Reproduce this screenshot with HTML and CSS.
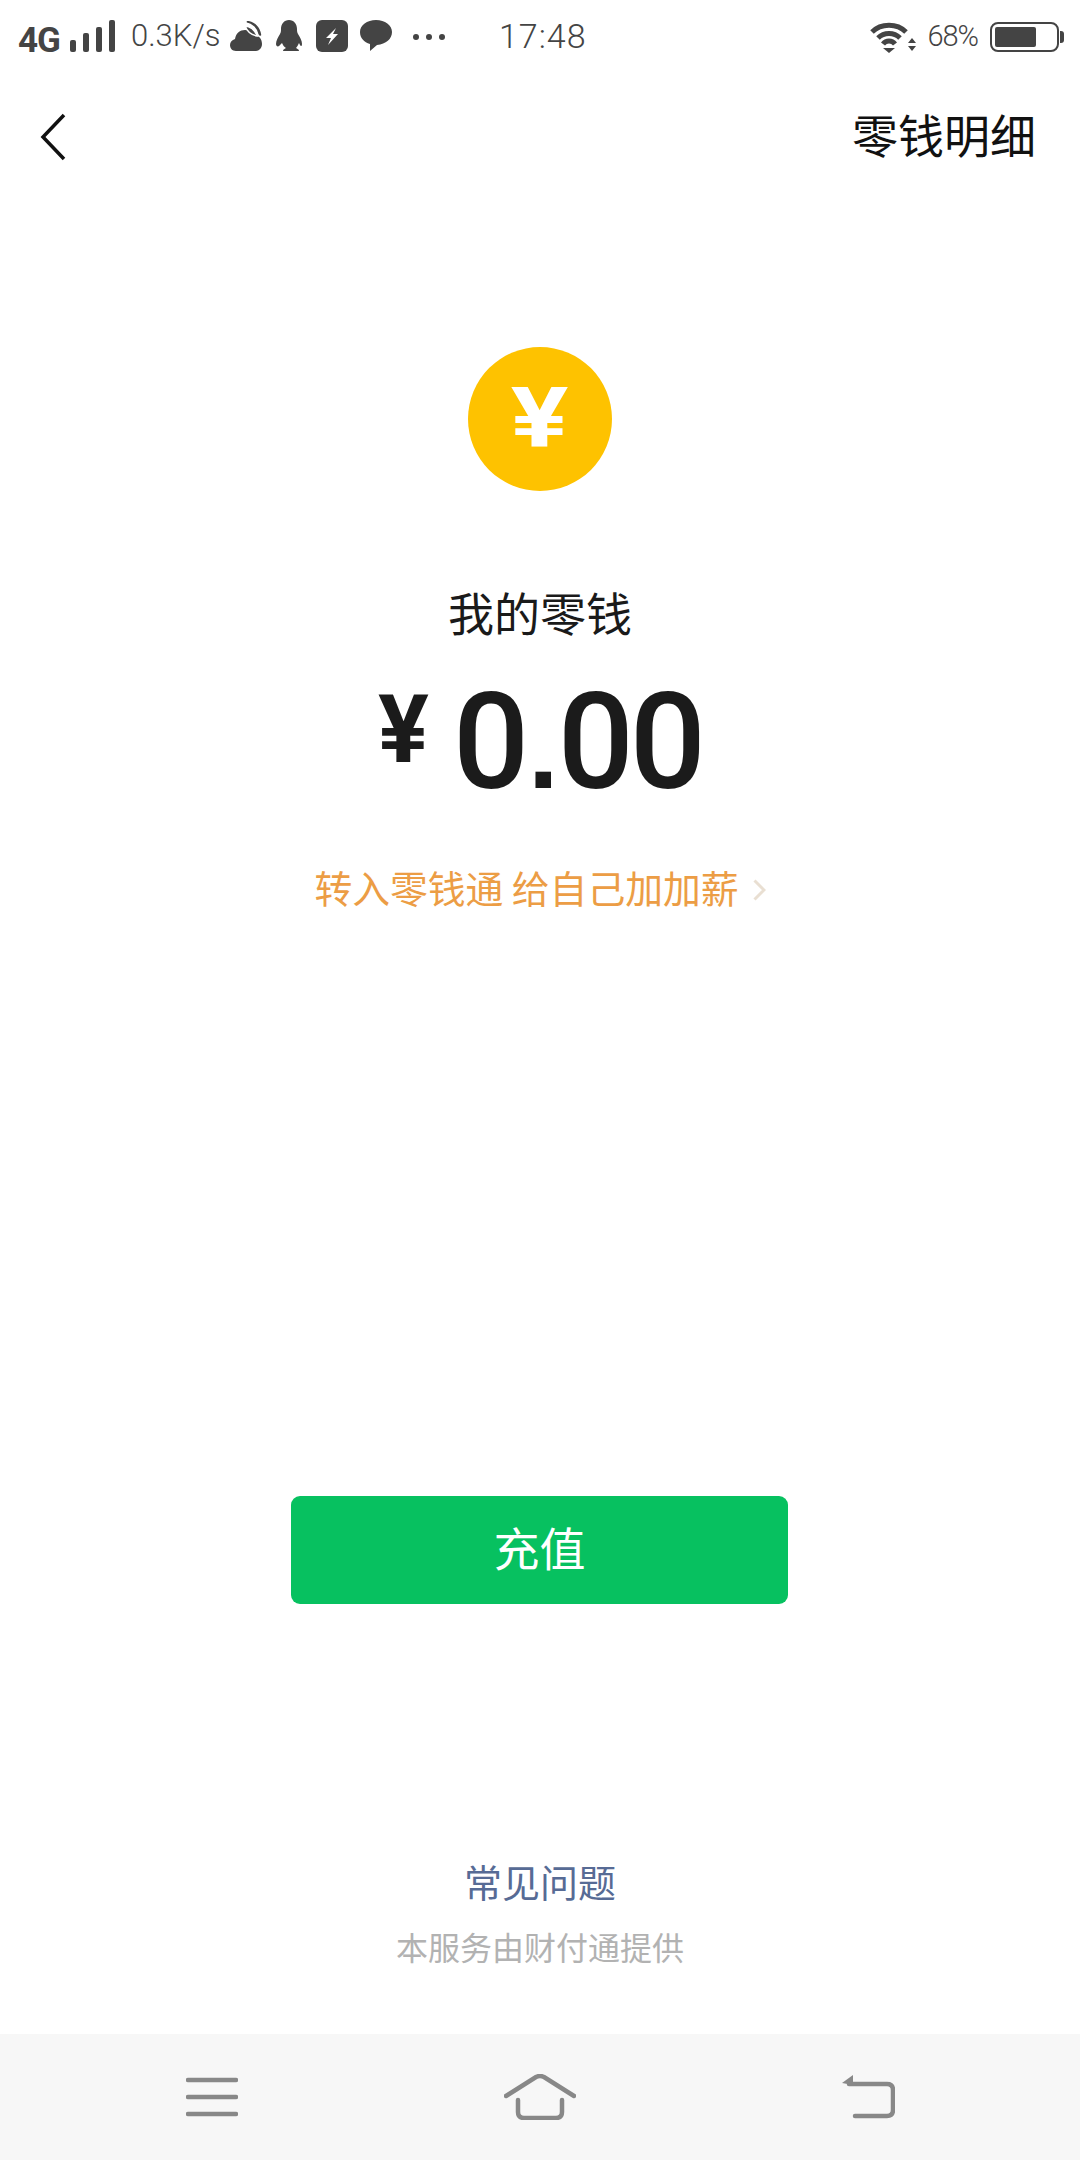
FILE: index.html
```html
<!DOCTYPE html>
<html lang="zh-CN">
<head>
<meta charset="utf-8">
<title>我的零钱</title>
<link rel="stylesheet" href="styles.css">
</head>
<body>
<div class="page">
  <header class="status">
    <span class="net">4G</span>
    <svg class="ic-signal" viewBox="0 0 45 32" width="45" height="32"><rect x="0" y="20" width="6" height="12" rx="2"/><rect x="13" y="13" width="6" height="19" rx="2"/><rect x="26" y="7" width="6" height="25" rx="2"/><rect x="39" y="0" width="6" height="32" rx="2"/></svg>
    <span class="speed">0.3K/s</span>
    <svg class="ic ic-cloud" viewBox="0 0 32 32" width="32" height="32"><path d="M6 31C2 31 0 28 0 25c0-3 2-5 5-6 1-6 5-9 10-9 4 0 7 2 9 5 5 0 8 4 8 9 0 4-3 7-6 7z"/><path class="halo" d="M15 6c5 0 10 4 12 10-6-1-10-5-12-10z"/><path class="halo" d="M16 0c8 0 15 6 16 15 0 2-3 2-4 0-1-6-6-11-12-12z"/></svg>
    <svg class="ic ic-qq" viewBox="0 0 28 32" width="28" height="32"><path d="M14 0c5 0 8 4 8 9 0 2 0 3 1 5 2 3 4 7 4 10 0 2-1 3-2 1l-1-2c-1 2-2 4-3 5 1 1 3 1 3 3H8c0-2 2-2 3-3-2-1-3-3-4-5l-2 2c-1 2-4 2-4-1 0-3 2-7 4-10 1-2 1-3 1-5 0-5 3-9 8-9z"/></svg>
    <svg class="ic ic-bolt" viewBox="0 0 32 32" width="32" height="32"><rect width="32" height="32" rx="6"/><path class="cut" d="M20 8 10 18h5l-3 7 10-11h-5z"/></svg>
    <svg class="ic ic-bubble" viewBox="0 0 32 32" width="32" height="32"><path d="M16 0c9 0 16 5 16 12 0 7-6 12-15 13l-7 6 0-7C4 22 0 18 0 12 0 5 7 0 16 0z"/></svg>
    <span class="dots"><i></i><i></i><i></i></span>
    <span class="time">17:48</span>
    <div class="status-right">
      <svg class="ic-wifi" viewBox="0 0 46 32" width="46" height="32"><path class="arc" d="M2 11C11 2 27 2 36 11M8 17C14 11 24 11 30 17M13 23C16 19 22 19 25 23"/><path d="M19 32l-6-5h12z"/><path d="M42 17l-4 5h8zM42 30l-4-5h8z"/></svg>
      <span class="pct">68%</span>
      <div class="battery"><div class="battery-fill"></div></div>
    </div>
  </header>

  <nav class="nav">
    <svg class="back" viewBox="0 0 26 48" width="26" height="48"><path d="M24 2 3 24l21 22"/></svg>
    <span class="nav-title">零钱明细</span>
  </nav>

  <main class="main">
    <div class="coin"><span class="coin-mark">¥</span></div>
    <div class="label">我的零钱</div>
    <div class="amount"><span class="cur">¥</span><span class="num">0<span class="dot">.</span>00</span></div>
    <div class="promo"><span>转入零钱通 给自己加加薪</span><svg class="chev" viewBox="0 0 13 22" width="13" height="22"><path d="M1.500 1.500 11 11l-9.500 9.500"/></svg></div>
    <button class="btn" type="button">充值</button>
    <div class="faq">常见问题</div>
    <div class="note">本服务由财付通提供</div>
  </main>

  <footer class="tabbar">
    <svg class="tab-ic" viewBox="0 0 52 40" width="52" height="40"><path d="M2 3h48M2 20h48M2 37h48"/></svg>
    <svg class="tab-ic" viewBox="0 0 72 46" width="72" height="46"><path d="M2 22 32 3q4-2 8 0l30 19"/><path d="M14 26v12q0 6 6 6h32q6 0 6-6V26"/></svg>
    <svg class="tab-ic" viewBox="0 0 54 44" width="54" height="44"><path d="M8 9h38q6 0 6 6v20q0 6-6 6H14"/><path class="fill" d="M1 8 12 0v10z"/></svg>
  </footer>
</div>
</body>
</html>
```
FILE: styles.css
```css
* { box-sizing: border-box; }
html, body { margin: 0; padding: 0; background: #fff; }
body { font-family: "Noto Sans CJK SC", "Roboto", sans-serif; }
.page { width: 1080px; height: 2160px; display: flex; flex-direction: column; overflow: hidden; background: #fff; }

.status { height: 74px; display: flex; align-items: center; padding-left: 18px; color: #444; font-family: "Roboto", sans-serif; flex: none; }
.status svg { fill: #444; flex: none; }
.net { font-size: 35px; font-weight: 700; width: 52px; margin-top: 6px; letter-spacing: -1px; }
.ic-signal { margin-top: -2px; }
.speed { font-size: 31px; font-weight: 300; margin-left: 16px; width: 88px; white-space: nowrap; margin-top: -3px; }
.ic { margin-top: -2px; }
.ic-cloud { margin-left: 11px; }
.ic-cloud .halo { stroke: #fff; stroke-width: 1.500; }
.ic-qq { margin-left: 13px; }
.ic-bolt { margin-left: 13px; }
.ic-bubble { margin-left: 12px; }
.ic-bolt .cut { fill: #fff; }
.dots { display: flex; gap: 7px; margin-left: 21px; }
.dots i { width: 6px; height: 6px; border-radius: 50%; background: #444; }
.time { font-size: 34px; font-weight: 300; margin-left: 54px; letter-spacing: 1px; margin-top: -3px; }
.status-right { margin-left: auto; padding-right: 21px; display: flex; align-items: center; }
.ic-wifi .arc { fill: none; stroke: #444; stroke-width: 5; }
.pct { font-size: 29px; font-weight: 300; margin-left: 11px; letter-spacing: -1px; margin-top: -2px; }
.battery { width: 69px; height: 30px; margin-left: 12px; border: 2.500px solid #444; border-radius: 8px; padding: 3px; position: relative; }
.battery::after { content: ""; position: absolute; right: -7px; top: 7px; width: 4px; height: 12px; background: #444; border-radius: 0 3px 3px 0; }
.battery-fill { width: 41px; height: 100%; background: #444; border-radius: 2px; }

.nav { height: 126px; display: flex; align-items: center; justify-content: space-between; padding: 0 44px 0 40px; flex: none; }
.back { fill: none; stroke: #111; stroke-width: 3.500; }
.nav-title { font-size: 46px; line-height: 60px; color: #111; margin-top: -9px; }

.main { flex: 1; display: flex; flex-direction: column; align-items: center; padding-top: 147px; }
.coin { width: 144px; height: 144px; border-radius: 50%; background: #fec200; color: #fff; font: 700 84px/144px "Roboto", sans-serif; text-align: center; margin-right: 1px; }
.coin-mark { display: inline-block; transform: scaleX(1.28); }
.label { margin-top: 90px; font-size: 46px; line-height: 60px; color: #1a1a1a; }
.amount { display: flex; align-items: flex-start; margin-top: 35px; height: 134px; font-family: "Roboto", sans-serif; color: #1b1b1b; }
.cur { font-size: 95px; font-weight: 700; line-height: 108px; margin-right: 24px; }
.num { font-size: 134px; font-weight: 500; line-height: 134px; letter-spacing: -4px; }
.dot { font-family: "Liberation Sans", sans-serif; font-weight: 700; font-size: 110px; margin: 0 3px; }
.promo { margin-top: 52px; height: 50px; display: flex; align-items: center; font-size: 37.800px; line-height: 50px; color: #ec9d45; white-space: pre; }
.chev { margin-left: 14px; margin-top: 6px; fill: none; stroke: #e9dfd2; stroke-width: 3; }
.btn { margin-top: 584px; margin-right: 1px; width: 497px; height: 108px; border: 0; border-radius: 9px; background: #07c160; color: #fff; font: 46px/60px "Noto Sans CJK SC", sans-serif; padding: 0 0 8px; }
.faq { margin-top: 252px; font-size: 38px; line-height: 50px; color: #576b95; }
.note { margin-top: 18px; font-size: 32px; line-height: 44px; color: #b2b2b2; }

.tabbar { height: 126px; flex: none; background: #f7f7f7; display: flex; align-items: center; justify-content: space-between; padding: 0 185px 0 186px; }
.tab-ic { fill: none; stroke: #888; stroke-width: 4.500; stroke-linecap: round; }
.tab-ic .fill { fill: #888; stroke: none; }
```
